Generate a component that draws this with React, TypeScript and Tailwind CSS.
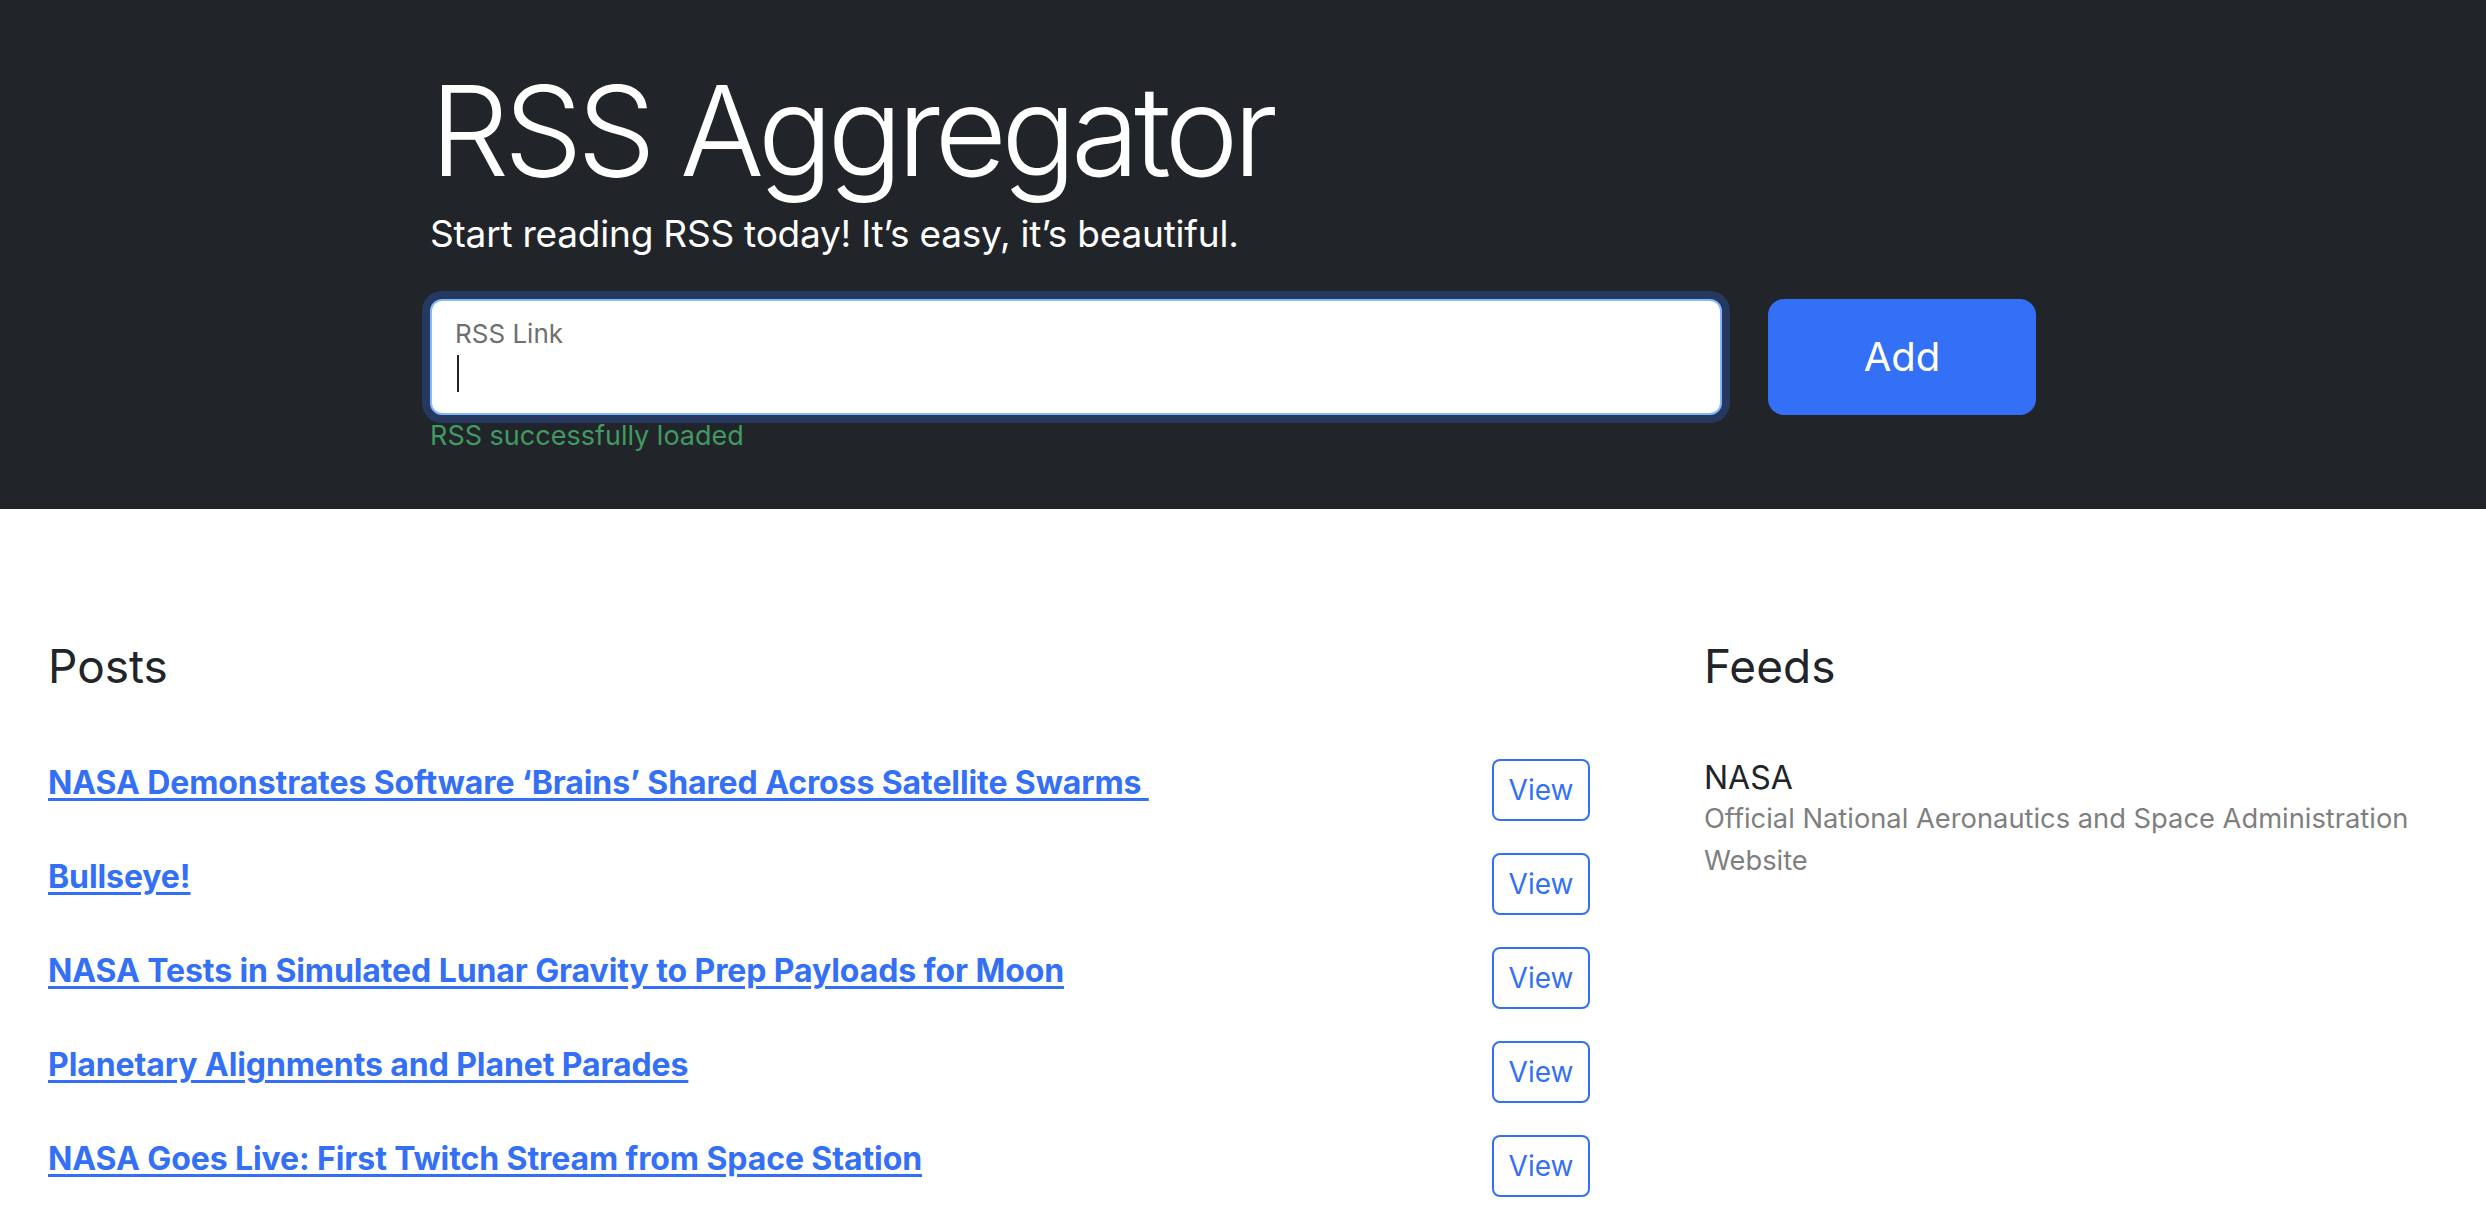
const posts = [
  'NASA Demonstrates Software ‘Brains’ Shared Across Satellite Swarms\u00a0',
  'Bullseye!',
  'NASA Tests in Simulated Lunar Gravity to Prep Payloads for Moon',
  'Planetary Alignments and Planet Parades',
  'NASA Goes Live: First Twitch Stream from Space Station',
];

export default function App() {
  return (
    <div className="min-h-screen bg-white font-['Inter','Noto_Sans',sans-serif] text-[#212529]">
      {/* top form */}
      <header className="h-[509px] bg-[#212529] pl-[430px] pt-[68px]">
        <div className="w-[1606px]">
          <h1 className="text-[125px] font-light leading-none tracking-[-0.045em] text-white">RSS Aggregator</h1>
          <p className="mt-[22px] text-[37px] leading-none tracking-[-0.006em] text-white">
            Start reading RSS today! It’s easy, it’s beautiful.
          </p>
          <div className="mt-[47px] flex gap-[46px]">
            <div className="flex-1">
              <div className="h-[116px] rounded-[12px] border-2 border-[#86b7fe] bg-white pl-[23px] pt-[20px] shadow-[0_0_0_8px_#25385f]">
                <div className="text-[26px] leading-none text-[#6d6f71]">RSS Link</div>
                <div className="ml-[2px] mt-[8px] h-[37px] w-[2px] bg-[#212529]" />
              </div>
              <div className="mt-[1px] text-[27px] leading-[1.5] text-[#409a62]">RSS successfully loaded</div>
            </div>
            <button type="button" className="h-[116px] w-[268px] rounded-[16px] bg-[#3470f5] text-[40px] text-white">
              Add
            </button>
          </div>
        </div>
      </header>

      <main className="flex pl-[48px] pt-[130px]">
        <section className="w-[1542px]">
          <h2 className="text-[46px] leading-[1.2]">Posts</h2>
          <ul className="mt-[49px]">
            {posts.map((title) => (
              <li key={title} className="flex h-[94px] items-start justify-between py-[16px]">
                <a
                  href="#"
                  className="text-[32px] font-bold leading-[1.5] tracking-[-0.003em] text-[#3470f5] underline decoration-[3px] underline-offset-[4px]"
                >
                  {title}
                </a>
                <button
                  type="button"
                  className="h-[62px] w-[98px] rounded-[8px] border-2 border-[#3470f5] text-[28px] text-[#3470f5]"
                >
                  View
                </button>
              </li>
            ))}
          </ul>
        </section>

        <section className="ml-[114px] w-[734px]">
          <h2 className="text-[46px] leading-[1.2]">Feeds</h2>
          <div className="mt-[49px] pt-[16px]">
            <h3 className="text-[32px] leading-[1.2]">NASA</h3>
            <p className="text-[27.3px] leading-[1.54] text-[#7f7f7f]">
              Official National Aeronautics and Space Administration Website
            </p>
          </div>
        </section>
      </main>
    </div>
  );
}
